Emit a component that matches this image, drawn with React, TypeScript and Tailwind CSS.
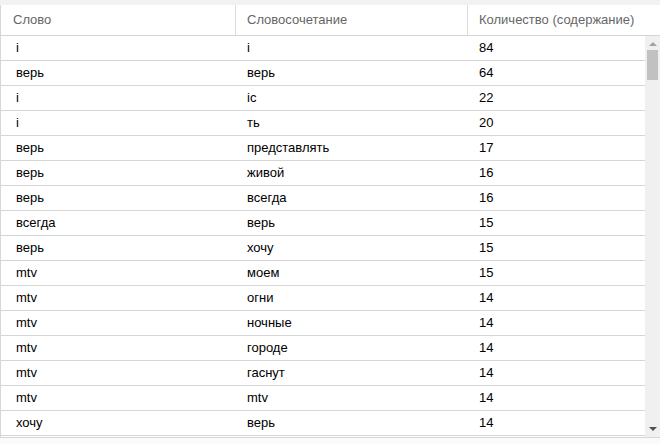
const rows: [string, string, number][] = [
  ['i', 'i', 84],
  ['верь', 'верь', 64],
  ['i', 'ic', 22],
  ['i', 'ть', 20],
  ['верь', 'представлять', 17],
  ['верь', 'живой', 16],
  ['верь', 'всегда', 16],
  ['всегда', 'верь', 15],
  ['верь', 'хочу', 15],
  ['mtv', 'моем', 15],
  ['mtv', 'огни', 14],
  ['mtv', 'ночные', 14],
  ['mtv', 'городе', 14],
  ['mtv', 'гаснут', 14],
  ['mtv', 'mtv', 14],
  ['хочу', 'верь', 14],
];

export default function App() {
  return (
    <div
      className="w-[660px] h-[444px] bg-white overflow-hidden flex flex-col text-[13px]"
      style={{ fontFamily: '"Liberation Sans", Arial, sans-serif' }}
    >
      <div className="h-[5px] bg-[#f2f2f2] shrink-0" />

      {/* header */}
      <div className="h-[31px] shrink-0 flex border-b border-l border-[#d6d6d6] text-[#666]">
        <div className="w-[235px] flex items-center pl-[12px] border-r border-[#dcdcdc]">Слово</div>
        <div className="w-[232px] flex items-center pl-[11px] border-r border-[#dcdcdc]">Словосочетание</div>
        <div className="flex-1 flex items-center pl-[11px]">Количество (содержание)</div>
      </div>

      {/* body */}
      <div className="h-[402px] shrink-0 flex border-b border-[#d6d6d6]">
        <div className="flex-1 overflow-hidden border-l border-[#d6d6d6]">
          {rows.map(([word, phrase, count], i) => (
            <div key={i} className="h-[25px] flex items-center border-b border-[#d6d6d6] text-black">
              <div className="w-[234px] pl-[15px]">{word}</div>
              <div className="w-[232px] pl-[12px]">{phrase}</div>
              <div className="flex-1 pl-[12px]">{count}</div>
            </div>
          ))}
        </div>

        {/* scrollbar */}
        <div className="w-[15px] bg-[#f0f0f0] flex flex-col items-center">
          <div className="h-[14px] flex items-center justify-center pt-[2px]">
            <div className="w-0 h-0 border-l-[4px] border-r-[4px] border-b-[4px] border-l-transparent border-r-transparent border-b-[#a3a3a3]" />
          </div>
          <div className="w-[11px] h-[30px] bg-[#c1c1c1]" />
          <div className="flex-1" />
          <div className="h-[14px] flex items-center justify-center pb-[2px]">
            <div className="w-0 h-0 border-l-[4px] border-r-[4px] border-t-[4px] border-l-transparent border-r-transparent border-t-[#505050]" />
          </div>
        </div>
      </div>
      <div className="flex-1 bg-[#fafafa]" />
    </div>
  );
}
